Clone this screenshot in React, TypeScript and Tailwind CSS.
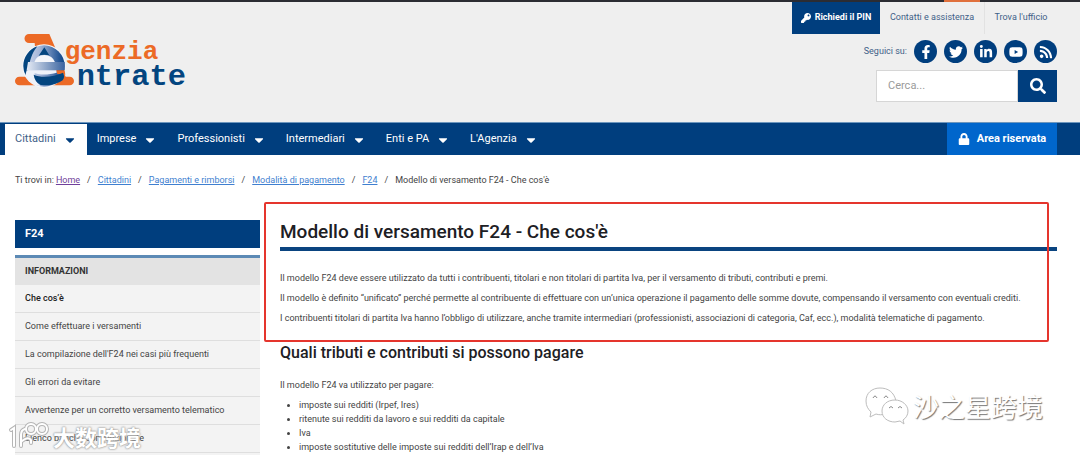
import { useState } from "react";
import {
  FaCaretDown,
  FaFacebookF,
  FaKey,
  FaLinkedinIn,
  FaLock,
  FaRss,
  FaSearch,
  FaTwitter,
  FaYoutube,
} from "react-icons/fa";

const navItems = [
  "Cittadini",
  "Imprese",
  "Professionisti",
  "Intermediari",
  "Enti e PA",
  "L'Agenzia",
];

const socials = [
  { label: "Facebook", icon: FaFacebookF },
  { label: "Twitter", icon: FaTwitter },
  { label: "LinkedIn", icon: FaLinkedinIn },
  { label: "YouTube", icon: FaYoutube },
  { label: "RSS", icon: FaRss },
];

const crumbs = [
  "Home",
  "Cittadini",
  "Pagamenti e rimborsi",
  "Modalità di pagamento",
  "F24",
];

const sideLinks = [
  "Che cos’è",
  "Come effettuare i versamenti",
  "La compilazione dell'F24 nei casi più frequenti",
  "Gli errori da evitare",
  "Avvertenze per un corretto versamento telematico",
  "Elenco banche convenzionate",
];

const taxes = [
  "imposte sui redditi (Irpef, Ires)",
  "ritenute sui redditi da lavoro e sui redditi da capitale",
  "Iva",
  "imposte sostitutive delle imposte sui redditi dell’Irap e dell’Iva",
];

const Logo = () => (
  <svg
    viewBox="42 36 540 192"
    className="w-[180px] h-16"
    role="img"
    aria-label="Agenzia Entrate"
  >
    <defs>
      <linearGradient id="ball" x1="0" y1="0" x2="1" y2="0">
        <stop offset="0" stopColor="#d5ddee" />
        <stop offset="0.4" stopColor="#a3b5d8" />
        <stop offset="0.85" stopColor="#2a5a99" />
        <stop offset="1" stopColor="#0a4686" />
      </linearGradient>
      <linearGradient id="bar" x1="0" y1="0" x2="1" y2="0">
        <stop offset="0" stopColor="#e6ebf5" />
        <stop offset="1" stopColor="#3a64a0" />
      </linearGradient>
    </defs>
    <path
      d="M87 42H148L166 84L106 92L104 69H87A13 13 0 0 1 87 42Z"
      fill="#ec6a26"
    />
    <path
      d="M58 170H84L110 196H58A13 13 0 0 1 58 170ZM170 154H190L197 170H209A13 13 0 0 1 209 196H150Z"
      fill="#ec6a26"
    />
    <circle cx="132" cy="138" r="65" fill="#f6f8fb" />
    <circle cx="132" cy="138" r="62" fill="url(#ball)" />
    <path
      d="M70 138A62 62 0 0 1 112 79C94 100 90 124 84 148L77 166A62 62 0 0 1 70 138Z"
      fill="#03457f"
    />
    <path d="M133 82L149 107Q133 101 116 107Z" fill="#03457f" />
    <path d="M103 127Q108 106 133 105Q158 106 165 127Z" fill="#f3f5fa" />
    <path d="M84 126H194V150H80Z" fill="url(#bar)" />
    <path
      d="M80 151H170V158C150 164 124 166 104 160Q98 176 122 199Q88 194 76 166Z"
      fill="#eef2f9"
    />
    <path d="M169 151H194L196 164L172 162Z" fill="#ec6a26" />
    <path
      d="M101 164C126 175 162 170 189 158Q196 170 188 181Q162 200 122 195Q104 186 101 164Z"
      fill="#03457f"
    />
    <g fontFamily="'Liberation Mono', monospace" fontWeight="700">
      <text x="194" y="117" fontSize="78" fill="#ec6a26">
        genzia
      </text>
      <text x="230" y="194" fontSize="91" fill="#03457f">
        ntrate
      </text>
    </g>
  </svg>
);

const Header = () => {
  const [query, setQuery] = useState("");

  return (
    <header className="bg-[#efefef]">
      <div className="h-[2px] bg-[#2b2c33] flex justify-end pr-[100px]">
        <div className="w-9 bg-[#e0703c]"></div>
      </div>
      <div className="flex justify-between pl-[14px] pr-[23px] pb-5">
        <a href="#" className="mt-[30px]">
          <Logo />
        </a>
        <div className="flex flex-col items-end">
          <div className="flex h-8 text-[9px] text-[#3f5f88]">
            <a
              href="#"
              className="w-[88px] bg-[#003e7e] text-white font-bold flex items-center justify-center gap-1 whitespace-nowrap"
            >
              <FaKey size={10} />
              Richiedi il PIN
            </a>
            <a
              href="#"
              className="w-[105px] flex items-center justify-center border-r border-[#e2e2e2]"
            >
              Contatti e assistenza
            </a>
            <a href="#" className="w-[72px] flex items-center justify-center">
              Trova l'ufficio
            </a>
          </div>
          <div className="flex items-center gap-[7px] mt-[6px] text-[9px] text-[#3f5f88]">
            <span>Seguici su:</span>
            {socials.map(({ label, icon: Icon }) => (
              <a
                key={label}
                href="#"
                aria-label={label}
                className="w-[23px] h-[23px] rounded-full bg-[#003e7e] text-white flex items-center justify-center"
              >
                <Icon size={14} />
              </a>
            ))}
          </div>
          <form
            className="flex mt-[7px] h-8"
            onSubmit={(e) => e.preventDefault()}
          >
            <input
              type="search"
              aria-label="Cerca"
              placeholder="Cerca..."
              value={query}
              onChange={(e) => setQuery(e.target.value)}
              className="w-[142px] px-[11px] bg-white border border-[#d6d6d6] text-[11px] placeholder:text-[#9a9a9a]"
            />
            <button
              type="submit"
              aria-label="Cerca"
              className="w-[39px] bg-[#003e7e] text-white flex items-center justify-center"
            >
              <FaSearch size={16} />
            </button>
          </form>
        </div>
      </div>
    </header>
  );
};

const Nav = () => (
  <nav className="bg-[#003e7e] border-t border-[#6d96bd] h-[33px] flex justify-between pl-[5px] pr-[23px] text-[11px] text-white">
    <div className="flex pt-px">
      {navItems.map((item, i) => (
        <a
          key={item}
          href="#"
          className={
            i === 0
              ? "flex items-center gap-[7px] px-[10px] bg-white text-[#3f5f88]"
              : "flex items-center gap-[7px] px-[10px]"
          }
        >
          {item}
          <FaCaretDown
            size={14}
            className={i === 0 ? "text-[#003e7e]" : "text-white"}
          />
        </a>
      ))}
    </div>
    <a
      href="#"
      className="w-[110px] bg-[#0066cc] font-bold flex items-center justify-center gap-[7px]"
    >
      <FaLock size={12} />
      Area riservata
    </a>
  </nav>
);

const Sidebar = () => (
  <aside className="w-[245px] shrink-0 text-[9px] text-[#444]">
    <h2 className="h-7 px-[10px] mb-[7px] bg-[#003e7e] text-white text-[11px] font-bold flex items-center">
      F24
    </h2>
    <div className="bg-[#f3f3f3] border-t-[3px] border-[#5c8ab5] pb-1">
      <h3 className="h-[27px] px-[10px] bg-[#e3e3e3] text-[#333] font-bold flex items-center">
        INFORMAZIONI
      </h3>
      <ul>
        {sideLinks.map((link, i) => (
          <li key={link} className="h-7 border-b border-[#dedede]">
            <a
              href="#"
              className={
                i === 0
                  ? "h-full px-[10px] flex items-center font-medium text-[#222]"
                  : "h-full px-[10px] flex items-center"
              }
            >
              {link}
            </a>
          </li>
        ))}
      </ul>
    </div>
  </aside>
);

const Article = () => (
  <main className="flex-1 min-w-0 text-[9px] text-[#444]">
    <section className="relative">
      <h1 className="h-[31px] pt-px text-[19px] leading-[22px] font-medium text-[#1d2024] border-b-4 border-[#0a4480]">
        Modello di versamento F24 - Che cos'è
      </h1>
      <div className="mt-5 leading-[14px] flex flex-col gap-[6px]">
        <p>
          Il modello F24 deve essere utilizzato da tutti i contribuenti,
          titolari e non titolari di partita Iva, per il versamento di tributi,
          contributi e premi.
        </p>
        <p>
          Il modello è definito “unificato” perché permette al contribuente di
          effettuare con un’unica operazione il pagamento delle somme dovute,
          compensando il versamento con eventuali crediti.
        </p>
        <p>
          I contribuenti titolari di partita Iva hanno l’obbligo di utilizzare,
          anche tramite intermediari (professionisti, associazioni di
          categoria, Caf, ecc.), modalità telematiche di pagamento.
        </p>
      </div>
      {/* highlight frame */}
      <div className="absolute -top-[18px] -bottom-[17px] -left-4 right-2 border-2 border-[#e5352d] rounded-xs pointer-events-none"></div>
    </section>
    <section className="mt-[18px]">
      <h2 className="text-base leading-5 font-medium text-[#1d2024]">
        Quali tributi e contributi si possono pagare
      </h2>
      <p className="mt-[15px] leading-[14px]">
        Il modello F24 va utilizzato per pagare:
      </p>
      <ul className="mt-[6px] pl-[19px] list-disc leading-[14px]">
        {taxes.map((tax) => (
          <li key={tax}>{tax}</li>
        ))}
      </ul>
    </section>
  </main>
);

const Watermarks = () => (
  <>
    <div className="absolute left-[865px] top-[387px] flex items-center gap-1 pointer-events-none">
      <svg
        width="44"
        height="38"
        viewBox="0 0 44 38"
        fill="#fff"
        stroke="#bdbdbd"
        strokeWidth="1"
      >
        <path d="M15 1C7 1 1 6 1 14C1 19 3 22 6 25L5 30L11 27C14 28 17 28 20 27L31 14C29 5 23 1 15 1Z" />
        <path d="M30 13C22 13 17 18 17 24C17 31 23 35 30 35L35 34L39 37L38 33C41 31 43 28 43 24C43 18 37 13 30 13Z" />
        <path
          d="M8 11Q10 7 12 11M19 11Q21 7 23 11M24 21Q26 18 28 21M33 21Q35 18 37 21"
          fill="none"
          stroke="#8a8a8a"
        />
      </svg>
      <span className="font-['Noto_Sans_CJK_SC',sans-serif] text-[26px] leading-9 text-white whitespace-nowrap [text-shadow:1px_1px_1px_#777]">
        沙之星跨境
      </span>
    </div>
    <div className="absolute left-2 top-[420px] flex items-center gap-1 pointer-events-none">
      <svg width="41" height="30" viewBox="0 0 41 30" fill="none">
        <g stroke="#b5b5b5" strokeWidth="4" strokeLinecap="round">
          <path d="M3 9L6 7V25M13 25V14Q13 9 17 8M14 20Q20 15 23 19V22" />
          <circle cx="23" cy="8" r="5" />
          <circle cx="34" cy="8" r="5" />
        </g>
        <g stroke="#fff" strokeWidth="2" strokeLinecap="round">
          <path d="M3 9L6 7V25M13 25V14Q13 9 17 8M14 20Q20 15 23 19V22" />
          <circle cx="23" cy="8" r="5" />
          <circle cx="34" cy="8" r="5" />
        </g>
      </svg>
      <span className="font-['Noto_Sans_CJK_SC',sans-serif] text-[22px] leading-8 font-bold text-white whitespace-nowrap [text-shadow:0_0_2px_#888,0_0_2px_#aaa]">
        大数跨境
      </span>
    </div>
  </>
);

const App = () => (
  <div className="relative overflow-hidden bg-white font-[Roboto,sans-serif]">
    <Header />
    <Nav />
    <div className="pl-[15px] pr-[23px]">
      <div className="pt-[18px] pb-[33px] flex text-[9px] leading-[14px] text-[#444]">
        <span className="mr-[2px]">Ti trovi in:</span>
        <ol className="flex">
          {crumbs.map((crumb, i) => (
            <li key={crumb}>
              <a
                href="#"
                className={
                  i === 0
                    ? "underline text-[#70409a]"
                    : "underline text-[#3f7fd0]"
                }
              >
                {crumb}
              </a>
              <span className="mx-[7px]">/</span>
            </li>
          ))}
          <li>Modello di versamento F24 - Che cos'è</li>
        </ol>
      </div>
      <div className="flex gap-5">
        <Sidebar />
        <Article />
      </div>
    </div>
    <Watermarks />
  </div>
);

export default App;
